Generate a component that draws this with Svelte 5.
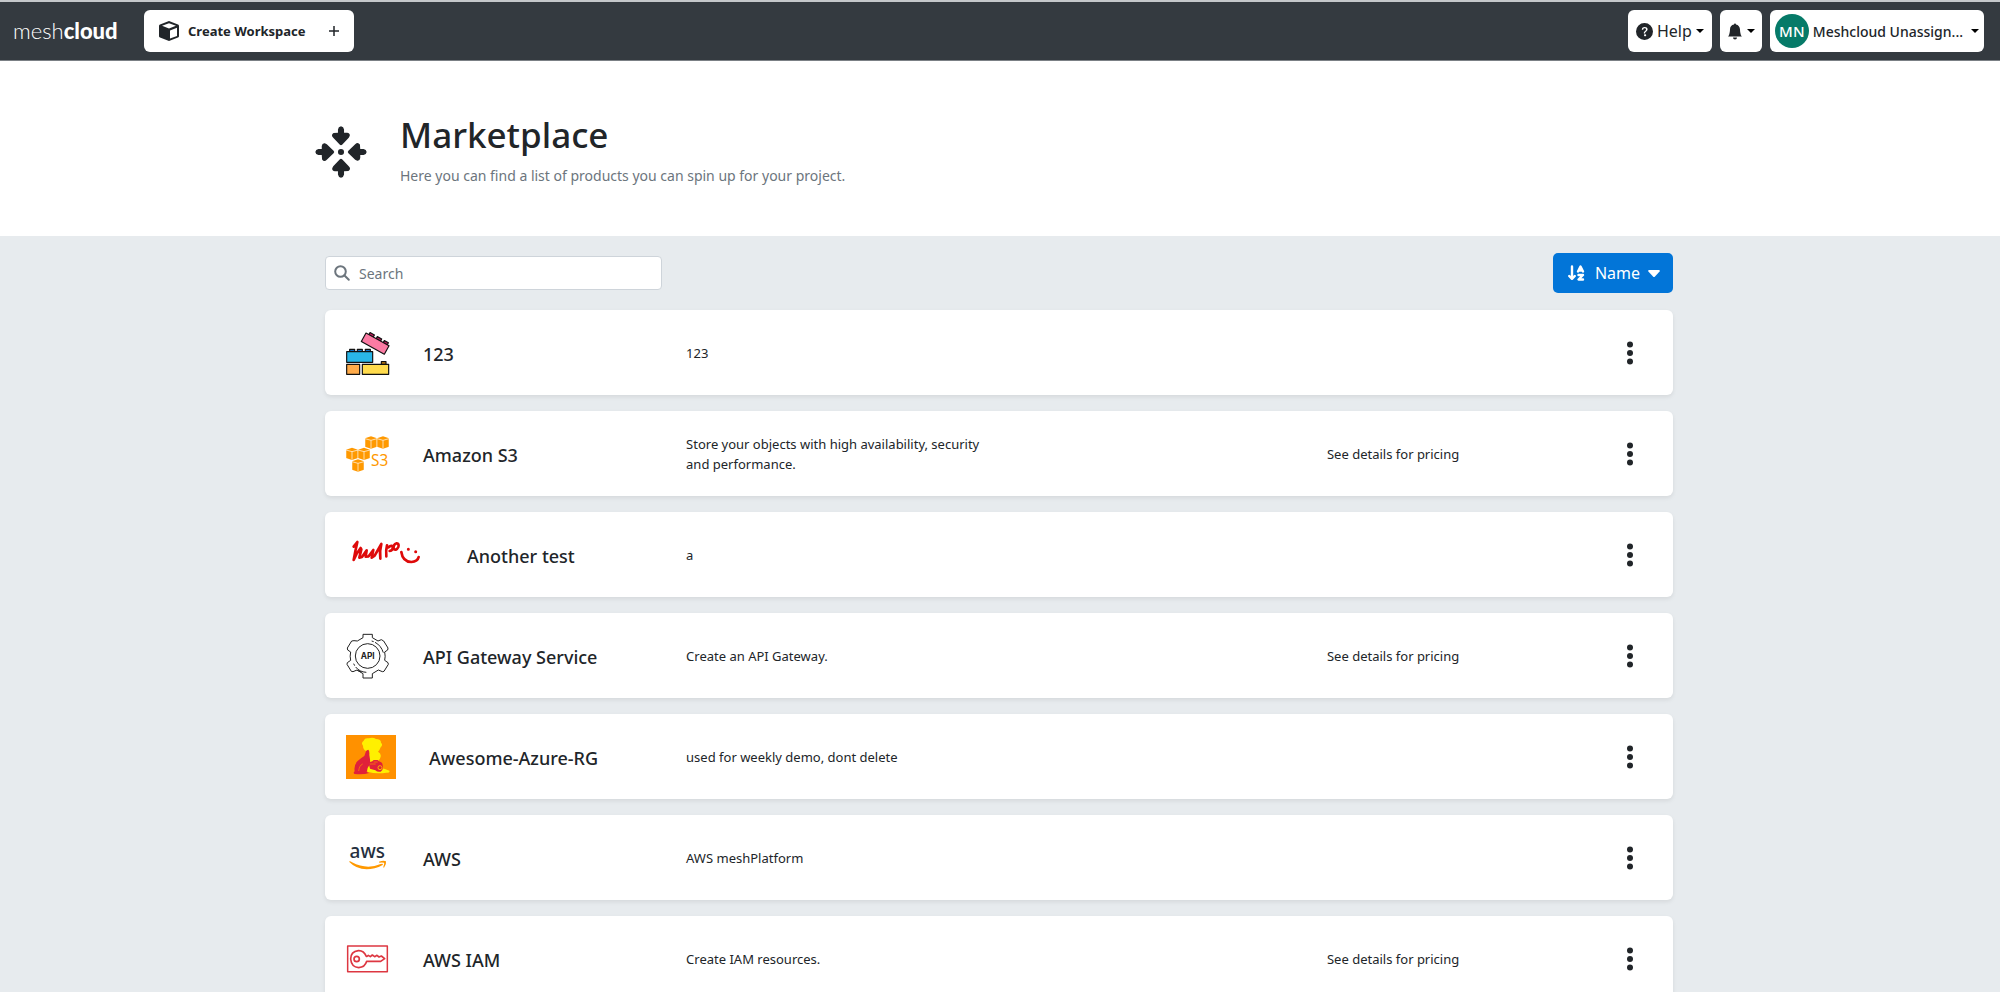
<script>
  const products = [
    { name: '123', logo: 'bricks', text: '123', price: '' },
    { name: 'Amazon S3', logo: 's3', text: 'Store your objects with high availability, security and performance.', price: 'See details for pricing' },
    { name: 'Another test', logo: 'hello', text: 'a', price: '' },
    { name: 'API Gateway Service', logo: 'api', text: 'Create an API Gateway.', price: 'See details for pricing' },
    { name: 'Awesome-Azure-RG', logo: 'azure', text: 'used for weekly demo, dont delete', price: '' },
    { name: 'AWS', logo: 'aws', text: 'AWS meshPlatform', price: '' },
    { name: 'AWS IAM', logo: 'iam', text: 'Create IAM resources.', price: 'See details for pricing' }
  ];
  const cubes = [[135, 77], [171, 77], [78, 111], [114, 111], [96, 146]];
  let query = $state('');
  const shown = $derived(products.filter((p) => p.name.toLowerCase().includes(query.toLowerCase())));
</script>

{#snippet caret()}
  <svg class="caret" width="8" height="4" viewBox="0 0 8 4" aria-hidden="true"><path d="M0 0h8L4 4z" /></svg>
{/snippet}

{#snippet logo(kind)}
  {#if kind === 'bricks'}
    <svg width="44" height="44" viewBox="108 285 132 132" stroke="#111" stroke-width="3.5" stroke-linejoin="round">
      <g transform="rotate(29 168 291)">
        <path fill="#c2185b" d="M178 284h15v8h-15zM203 284h15v8h-15zM227 284h14v8h-14z" />
        <path fill="#fb7ba3" d="M168 291h79v29h-79z" />
      </g>
      <path fill="#1271c4" d="M119 340h15v8h-15zM142 340h15v8h-15zM166 340h15v8h-15z" />
      <path fill="#29b6e8" d="M110 347h78v32h-78z" />
      <path fill="#ffab4a" d="M110 385h39v30h-39z" />
      <path fill="#d6890f" d="M214 377h14v8h-14z" />
      <path fill="#ffdb4d" d="M157 385h79v30h-79z" />
    </svg>
  {:else if kind === 's3'}
    <svg width="44" height="44" viewBox="78 64 132 132">
      {#each cubes as [x, y]}
        <g transform="translate({x} {y})">
          <path fill="#ff9900" d="M0 6 18 0l18 6v25l-18 6-18-6z" />
          <path fill="none" stroke="#fff" stroke-width="2" d="M0 7l18 5 18-5M18 12v24" />
          <path fill="none" stroke="#fff" stroke-width="1.5" d="M0 6v26M36 6v26" />
        </g>
      {/each}
      <text x="153" y="165" fill="#ff9900" font-size="46" font-family="Noto Sans, sans-serif">S3</text>
    </svg>
  {:else if kind === 'hello'}
    <svg width="88" height="44" viewBox="78 70 264 132" fill="none" stroke="#de0a0a" stroke-width="8" stroke-linecap="round" stroke-linejoin="round">
      <path d="M101 111L112 97L106 125L101 151L109 134L122 115L124 119L118 144L126 142L140 122L137 141L146 140L160 121L155 144L164 138L184 103Q178 126 181 147" />
      <path d="M201 107Q197 122 199 140M205 113Q216 105 219 111Q219 122 209 124M221 118Q219 104 230 101Q238 102 235 112Q229 124 221 118M244 127Q248 156 274 157Q293 156 296 142" />
      <path stroke-width="9" d="M265 119h.1M287 126h.1" />
    </svg>
  {:else if kind === 'api'}
    <svg width="44" height="44" viewBox="78 55 132 132" fill="none" stroke="#222" stroke-width="3" stroke-linejoin="round">
      <path d="M129 56H157V66L174 76L184 72L191 76L204 97L203 103L194 109Q197 122 194 134L204 141L205 146L192 167L187 168L175 163L157 174V187H129V174L111 163L99 168L94 167L81 146L82 141L92 134Q89 122 92 109L83 103L82 97L95 76L102 75L112 76L129 66Z" />
      <circle cx="143" cy="121" r="37" />
      <path d="M155 76L161 78M165 80Q183 89 190 111M101 144L104 150M107 154Q119 169 139 170M112 164L124 169" />
      <text x="143" y="130" fill="#222" stroke="none" text-anchor="middle" font-size="25" font-weight="700" font-family="Inter, sans-serif">API</text>
    </svg>
  {:else if kind === 'azure'}
    <svg width="50" height="44" viewBox="78 57 150 132">
      <path fill="#ff9100" d="M78 57h150v132H78z" />
      <path fill="#fff000" d="M129 89q-7-9 2-15 3-9 15-7 13-4 22 2 15 0 15 11 7 6-1 14-3 9-8 13 10 5 8 15-2 9-7 12l7 22q13 2 26 8 3 7-9 6-29 5-57-3l-5-46 3-16q-11-3-11-16z" />
      <path fill="#e0203a" d="M138 106Q140 101 145 101Q149 104 148 117L150 130Q152 146 143 156L140 168L147 171Q133 176 104 174Q98 171 104 166Q101 148 112 136Q124 125 133 120Z" />
      <path fill="#e0203a" d="M147 146Q147 137 157 136L161 132H173L177 136Q188 138 188 148Q191 162 182 167Q172 169 166 163L150 158Z" />
      <path fill="none" stroke="#ff9100" stroke-width="2" d="M116 165Q118 148 128 144M150 144h17M161 138h12" />
      <circle cx="180" cy="155" r="6" fill="#e0203a" stroke="#ffb000" stroke-width="3" />
    </svg>
  {:else if kind === 'aws'}
    <svg width="44" height="44" viewBox="78 63 132 132">
      <text x="142" y="128" fill="#252f3e" text-anchor="middle" font-size="57" font-weight="500" font-family="Noto Sans, sans-serif">aws</text>
      <path fill="#ff9900" d="M88 139q3-1 8 3 44 23 86 5 9-3 6 3-24 13-48 13-32-1-52-22zM177 140q14-5 21-1 2 9-6 19-4 0-1-6 3-7 1-9-6-1-13 0-3-1-2-3z" />
    </svg>
  {:else}
    <svg width="44" height="44" viewBox="78 366 132 132" fill="none" stroke="#dd3741" stroke-width="5" stroke-linejoin="round">
      <path stroke-width="4.5" d="M83 393h119v77H83z" />
      <path d="M139 424q-8-18-24-17-23 3-23 25 2 24 24 26 19-1 24-19h42l12-8-10-8-7 3-6-5-7 4-7-5-6 5-6-4-4 3z" />
      <circle cx="110" cy="432" r="8" />
    </svg>
  {/if}
{/snippet}

<div class="page">
  <header class="topbar">
    <a class="brand" href="#home"><span>mesh</span><b>cloud</b></a>
    <button class="workspace">
      <svg width="22" height="20" viewBox="0 0 22 20" aria-hidden="true">
        <path fill="#212529" d="M11 0l9 3.4q1 .4 1 1.4v10.4q0 1-1 1.4L11 20l-9-3.4q-1-.4-1-1.4V4.800q0-1 1-1.400z" />
        <path fill="#fff" d="M11 2.200l7 2.600-7 2.700-7-2.700zM12 9.400l7-2.700v8.300l-7 2.600z" />
      </svg>
      <span>Create Workspace</span>
      <svg class="plus" width="12" height="12" viewBox="0 0 12 12" aria-hidden="true"><path stroke="#212529" stroke-width="1.500" d="M6 1v10M1 6h10" /></svg>
    </button>
    <div class="actions">
      <button class="help">
        <svg width="17" height="17" viewBox="0 0 16 16" aria-hidden="true">
          <path fill="#212529" d="M16 8A8 8 0 1 1 0 8a8 8 0 0 1 16 0M5.500 6.030a.24.24 0 0 0 .24.25h.83c.13 0 .24-.11.25-.25.09-.66.54-1.130 1.340-1.130.69 0 1.310.34 1.310 1.170 0 .63-.37.93-.97 1.370-.67.49-1.210 1.060-1.170 1.990v.22a.25.25 0 0 0 .25.25h.81a.25.25 0 0 0 .25-.25v-.11c0-.72.27-.93 1.010-1.490.61-.46 1.250-.98 1.250-2.060 0-1.510-1.280-2.240-2.680-2.240-1.270 0-2.660.59-2.750 2.290zM7.560 11.600c0 .53.43.93 1.010.93.61 0 1.030-.4 1.030-.93 0-.55-.42-.95-1.030-.95-.59 0-1.010.4-1.010.95" />
        </svg>
        <span>Help</span>
        {@render caret()}
      </button>
      <button class="bell" aria-label="Notifications">
        <svg width="16" height="17" viewBox="0 0 16 16" aria-hidden="true"><path fill="#212529" d="M8 16a2 2 0 0 0 2-2H6a2 2 0 0 0 2 2m.995-14.901a1 1 0 1 0-1.990 0A5 5 0 0 0 3 6c0 1.098-.5 6-2 7h14c-1.500-1-2-5.902-2-7 0-2.420-1.720-4.440-4.005-4.901" /></svg>
        {@render caret()}
      </button>
      <button class="account">
        <span class="avatar">MN</span>
        <span class="who">Meshcloud Unassign...</span>
        {@render caret()}
      </button>
    </div>
  </header>

  <section class="hero">
    <div class="hero-inner">
      <svg width="50" height="52" viewBox="44 76 144 154" aria-hidden="true" fill="#212529">
        <g id="arrow"><path d="M107 96V86q1-8 9-9 8 1 9 9v10h9q9 1 8 9l-3 6-19 20q-4 4-8 0L93 111q-8-8 1-14z" /></g>
        <use href="#arrow" transform="rotate(90 116 153)" />
        <use href="#arrow" transform="rotate(180 116 153)" />
        <use href="#arrow" transform="rotate(270 116 153)" />
        <circle cx="116" cy="153" r="9" />
      </svg>
      <div>
        <h1>Marketplace</h1>
        <p>Here you can find a list of products you can spin up for your project.</p>
      </div>
    </div>
  </section>

  <main>
    <div class="tools">
      <label class="search">
        <svg width="16" height="16" viewBox="0 0 16 16" fill="none" stroke="#6c757d" stroke-width="2" stroke-linecap="round" aria-hidden="true"><circle cx="6.500" cy="6.500" r="5.300" /><path d="M10.500 10.500l4.300 4.300" /></svg>
        <input type="text" placeholder="Search" aria-label="Search" bind:value={query} />
      </label>
      <button class="sort">
        <svg width="17" height="16" viewBox="0 0 17 16" fill="none" stroke="#fff" stroke-width="2.400" stroke-linecap="round" stroke-linejoin="round" aria-hidden="true">
          <path d="M4 1.500v12M1.200 11L4 13.800 6.800 11M10.500 10H15l-4.500 4.500H15M10 6.500L12.500 1.500 15 6.500M11 5.500h3" />
        </svg>
        <span>Name</span>
        <svg width="12" height="7" viewBox="0 0 12 7" aria-hidden="true"><path fill="#fff" d="M1 0h10q1.500.2.600 1.400L7 6.400q-1 1-2 0L.4 1.400Q-.5.2 1 0z" /></svg>
      </button>
    </div>

    <ul>
      {#each shown as product (product.name)}
        <li>
          <div class="title">
            {@render logo(product.logo)}
            <h2>{product.name}</h2>
          </div>
          <p>{product.text}</p>
          <p class="price">{product.price}</p>
          <button class="more" aria-label="Options for {product.name}">
            <svg width="6" height="24" viewBox="0 0 6 24" fill="#212529" aria-hidden="true"><circle cx="3" cy="3.500" r="3" /><circle cx="3" cy="12" r="3" /><circle cx="3" cy="20.500" r="3" /></svg>
          </button>
        </li>
      {/each}
    </ul>
  </main>
</div>

<style>
  :global(body) {
    margin: 0;
    background: #e7ebee;
  }
  .page {
    font-family: "Noto Sans", "Open Sans", sans-serif;
    color: #212529;
    height: 100vh;
    overflow: hidden;
  }
  button {
    font: inherit;
    color: inherit;
    border: 0;
    background: #fff;
    cursor: pointer;
    display: flex;
    align-items: center;
  }
  svg {
    flex: none;
    display: block;
    overflow: visible;
  }
  h1, h2, p, ul {
    margin: 0;
    padding: 0;
  }
  .topbar {
    box-sizing: border-box;
    height: 61px;
    padding: 0 16px 0 13px;
    display: flex;
    align-items: center;
    background: #343a40;
    border-top: 2px solid #c4c7ca;
    border-bottom: 1px solid #7b8085;
  }
  .brand {
    width: 107px;
    margin-right: 24px;
    color: #fff;
    text-decoration: none;
    font: 300 22px/24px Lato, sans-serif;
    white-space: nowrap;
  }
  .brand b {
    font-weight: 900;
  }
  .topbar button {
    height: 42px;
    border-radius: 6px;
    white-space: nowrap;
  }
  .workspace {
    padding: 0 14px;
    font-size: 13px;
    font-weight: 700;
  }
  .workspace span {
    margin: 0 22px 0 8px;
  }
  .actions {
    display: flex;
    gap: 8px;
    margin-left: auto;
  }
  .help {
    padding: 0 8px;
    gap: 4px;
    font-size: 16px;
  }
  .bell {
    padding: 0 7px;
    gap: 4px;
  }
  .account {
    padding: 0 5px;
    font-size: 14px;
    font-weight: 500;
  }
  .avatar {
    width: 34px;
    height: 34px;
    margin-right: 4px;
    border-radius: 50%;
    background: #067a68;
    color: #fff;
    font-size: 15px;
    line-height: 34px;
  }
  .who {
    margin-right: 8px;
  }
  .hero {
    background: #fff;
    padding: 49px 17px 46px 15px;
  }
  .hero-inner {
    max-width: 1366px;
    margin: 0 auto;
    display: flex;
    align-items: center;
    gap: 34px;
  }
  .hero-inner svg {
    margin-top: 4px;
  }
  h1 {
    font-size: 35px;
    line-height: 50px;
    font-weight: 500;
  }
  .hero p {
    margin-top: 2px;
    color: #6c757d;
    font-size: 14px;
    line-height: 28px;
  }
  main {
    max-width: 1348px;
    margin: 0 auto;
    padding: 17px 17px 0 15px;
  }
  .tools {
    display: flex;
    align-items: center;
    justify-content: space-between;
    margin-bottom: 17px;
  }
  .search {
    box-sizing: border-box;
    width: 337px;
    height: 34px;
    display: flex;
    align-items: center;
    gap: 9px;
    padding: 0 8px;
    border: 1px solid #ced4da;
    border-radius: 4px;
    background: #fff;
  }
  input {
    flex: 1;
    min-width: 0;
    padding: 2px 0 0;
    border: 0;
    outline: 0;
    background: none;
    color: #212529;
    font: 14px/20px "Noto Sans", "Open Sans", sans-serif;
  }
  input::placeholder {
    color: #6c757d;
    opacity: 1;
  }
  .sort {
    height: 40px;
    padding: 0 13px 0 15px;
    border-radius: 5px;
    background: #0275d8;
    color: #fff;
    font-size: 16px;
  }
  .sort span {
    margin: 0 8px 0 10px;
  }
  ul {
    list-style: none;
    display: grid;
    gap: 16px;
  }
  li {
    box-sizing: border-box;
    height: 85px;
    padding: 0 19px 0 21px;
    display: grid;
    grid-template-columns: 26fr 24fr 25fr 13fr 12fr;
    align-items: center;
    background: #fff;
    border-radius: 6px;
    box-shadow: 0 2px 4px rgba(0, 0, 0, 0.08);
  }
  li > * {
    min-width: 0;
  }
  .title {
    display: flex;
    align-items: center;
    gap: 33px;
  }
  h2 {
    padding-top: 2px;
    font-size: 18px;
    line-height: 24px;
    font-weight: 500;
    white-space: nowrap;
  }
  li p {
    font-size: 13px;
    line-height: 20px;
    padding-right: 12px;
  }
  li .price {
    grid-column: 4;
  }
  .more {
    grid-column: 5;
    justify-self: end;
    padding: 8px 21px;
  }
</style>
